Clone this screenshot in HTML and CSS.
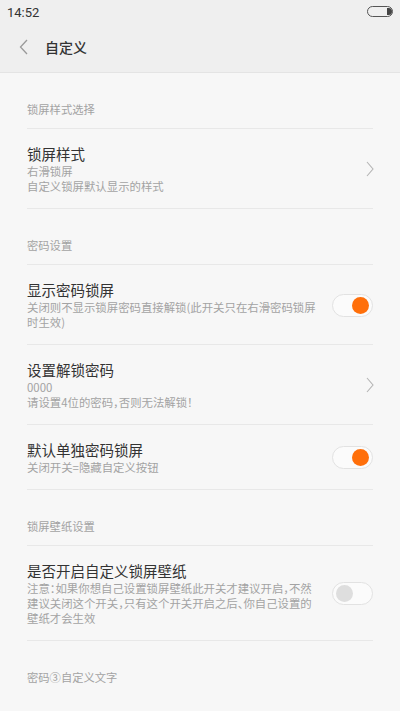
FILE: index.html
```html
<!DOCTYPE html>
<html lang="zh-CN">
<head>
    <meta charset="UTF-8">
    <meta name="viewport" content="width=device-width, initial-scale=1.0">
    <title>自定义</title>
    <link rel="stylesheet" href="styles.css">
</head>
<body>
    <div class="appbar">
        <div class="status">
            <span class="time">14:52</span>
            <svg class="battery" width="27" height="12" viewBox="0 0 27 12">
                <rect x="0.5" y="0.5" width="25" height="10" rx="5" fill="none" stroke="#555" stroke-width="1"/>
                <path d="M20 2 h1.5 a3.5 3.5 0 0 1 0 7 H20 z" fill="#444"/>
            </svg>
        </div>
        <div class="toolbar">
            <svg class="back" width="10" height="16" viewBox="0 0 10 16">
                <path d="M8 1 L1.5 8 L8 15" fill="none" stroke="#9a9a9a" stroke-width="1.3"/>
            </svg>
            <h1>自定义</h1>
        </div>
    </div>

    <div class="list">
        <div class="group-title">锁屏样式选择</div>
        <div class="item">
            <div class="text">
                <div class="title">锁屏样式</div>
                <div class="summary">右滑锁屏</div>
                <div class="summary">自定义锁屏默认显示的样式</div>
            </div>
            <svg class="arrow" width="8" height="16" viewBox="0 0 8 16">
                <path d="M1 1 L7 8 L1 15" fill="none" stroke="#b4b4b4" stroke-width="1.1"/>
            </svg>
        </div>

        <div class="group-title">密码设置</div>
        <div class="item">
            <div class="text">
                <div class="title">显示密码锁屏</div>
                <div class="summary">关闭则不显示锁屏密码直接解锁(此开关只在右滑密码锁屏时生效)</div>
            </div>
            <div class="switch on"><span class="knob"></span></div>
        </div>
        <div class="item">
            <div class="text">
                <div class="title">设置解锁密码</div>
                <div class="summary">0000</div>
                <div class="summary">请设置4位的密码，否则无法解锁！</div>
            </div>
            <svg class="arrow" width="8" height="16" viewBox="0 0 8 16">
                <path d="M1 1 L7 8 L1 15" fill="none" stroke="#b4b4b4" stroke-width="1.1"/>
            </svg>
        </div>
        <div class="item">
            <div class="text">
                <div class="title">默认单独密码锁屏</div>
                <div class="summary">关闭开关=隐藏自定义按钮</div>
            </div>
            <div class="switch on"><span class="knob"></span></div>
        </div>

        <div class="group-title">锁屏壁纸设置</div>
        <div class="item">
            <div class="text">
                <div class="title">是否开启自定义锁屏壁纸</div>
                <div class="summary">注意：如果你想自己设置锁屏壁纸此开关才建议开启，不然建议关闭这个开关，只有这个开关开启之后、你自己设置的壁纸才会生效</div>
            </div>
            <div class="switch"><span class="knob"></span></div>
        </div>

        <div class="group-title last">密码③自定义文字</div>
    </div>
</body>
</html>
```

FILE: styles.css
```css
body {
    margin: 0;
    padding: 0;
    background-color: #f7f7f7;
    font-family: "Noto Sans CJK SC", "Noto Sans", sans-serif;
    color: #333;
}
.appbar {
    height: 72px;
    background-color: #efefef;
    border-bottom: 1px solid #e4e4e4;
}
.status {
    height: 24px;
    display: flex;
    align-items: center;
    justify-content: space-between;
    padding: 0 6px 0 7px;
}
.time {
    font-family: Roboto, "Noto Sans", sans-serif;
    font-size: 13px;
    color: #333;
}
.battery {
    margin-top: -1px;
}
.toolbar {
    height: 46px;
    display: flex;
    align-items: center;
    padding-left: 19px;
}
.back {
    margin-right: 16px;
}
.toolbar h1 {
    margin: 0;
    font-size: 14px;
    font-weight: 500;
    color: #333;
}
.list {
    padding: 0 27px;
}
.group-title {
    font-size: 11.3px;
    line-height: 15px;
    color: #a3a3a3;
    padding: 29px 0 11px;
    border-bottom: 1px solid #e8e8e8;
}
.group-title.last {
    border-bottom: none;
}
.item {
    display: flex;
    align-items: center;
    gap: 12px;
    padding: 15px 0 14px;
    border-bottom: 1px solid #e8e8e8;
}
.text {
    flex: 1;
}
.title {
    font-size: 14.5px;
    line-height: 20px;
    color: #333;
}
.summary {
    font-size: 11.4px;
    line-height: 15px;
    color: #a3a3a3;
    font-feature-settings: "halt";
}
.arrow {
    margin-right: -1px;
}
.switch {
    box-sizing: border-box;
    width: 41px;
    height: 23px;
    border: 1px solid #e2e2e2;
    border-radius: 12px;
    background-color: #fbfbfb;
    display: flex;
    align-items: center;
    padding: 0 3px;
    justify-content: flex-start;
}
.switch.on {
    justify-content: flex-end;
}
.knob {
    width: 17px;
    height: 17px;
    border-radius: 50%;
    background-color: #dedede;
}
.switch.on .knob {
    background-color: #ff6f0a;
}
```
